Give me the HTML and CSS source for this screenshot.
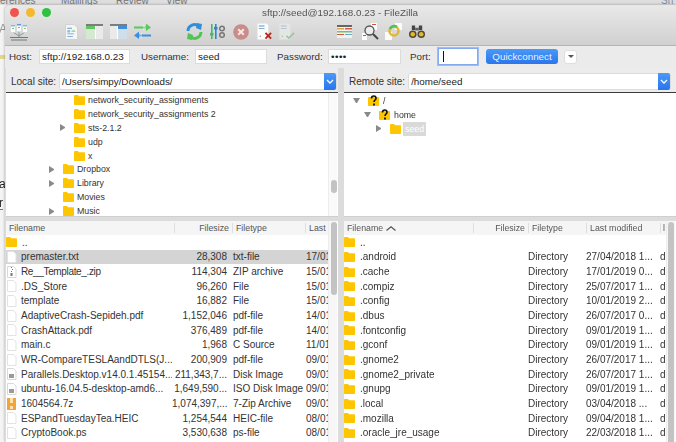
FILE: index.html
```html
<!DOCTYPE html>
<html lang="en">

<head>
  <meta charset="UTF-8" />
  <title>sftp://seed@192.168.0.23 - FileZilla</title>
  <link rel="stylesheet" href="styles.css">
</head>

<body>
  <svg class="defs" width="0" height="0">
    <symbol id="folder" viewBox="0 0 11 10">
      <path d="M0 1.2C0 .5.4 0 1 0h3l1 1.2h5c.6 0 1 .4 1 1V9c0 .6-.4 1-1 1H1c-.6 0-1-.4-1-1z" fill="#fec601" />
    </symbol>
    <symbol id="file" viewBox="0 0 11 12">
      <path d="M1.5.5h6l2.5 2.5v8.500h-8.500z" fill="#fff" stroke="#e2e2e2" />
    </symbol>
    <symbol id="disk" viewBox="0 0 11 12">
      <path d="M1.5.5h6l2.5 2.5v8.500h-8.500z" fill="#fff" stroke="#d8d8d8" />
      <path d="M3 6h5v4H3z" fill="#9a9a9a" />
    </symbol>
    <symbol id="zip" viewBox="0 0 11 12">
      <path d="M1.5.5h6l2.5 2.5v8.500h-8.500z" fill="#fff" stroke="#d8d8d8" />
      <path d="M5 1h1v1H5zM6 3h1v1H6zM5 5h1v1H5zM4.500 7h2v3h-2z" fill="#777" />
    </symbol>
    <symbol id="archive" viewBox="0 0 9 12">
      <path d="M0 0h9v12H0z" fill="#f3a33a" />
      <path d="M3 0h3v5H3zM3 8h3v3H3z" fill="#fbe0b0" />
    </symbol>
    <symbol id="unknown" viewBox="0 0 11 12">
      <path d="M0 3c0-.6.4-1 1-1h9c.6 0 1 .4 1 1v7c0 .6-.4 1-1 1H1c-.6 0-1-.4-1-1z" fill="#fec601" />
      <path d="M3.500 3.500C3.500 1.800 4.500 1 5.700 1S8 1.900 8 3.200C8 5 6 5 6 7" fill="none" stroke="#111" stroke-width="1.600" />
      <path d="M5.100 8.500h1.800v2H5.100z" fill="#111" />
    </symbol>
  </svg>

  <div class="page-top">
    <span class="menu-word menu-prefs">erences</span>
    <span class="menu-word menu-mail">Mailings</span>
    <span class="menu-word menu-review">Review</span>
    <span class="menu-word menu-view">View</span>
    <span class="menu-word menu-share">Sh</span>
  </div>
  <span class="page-scrap scrap-cap">A</span>
  <span class="page-mark"></span>
  <span class="page-scrap scrap-a">a</span>
  <span class="page-scrap scrap-r">r</span>

  <div class="window">
    <div class="titlebar">
      <div class="lights">
        <span class="light red"></span>
        <span class="light yellow"></span>
        <span class="light green"></span>
      </div>
      <div class="title">sftp://seed@192.168.0.23 - FileZilla</div>

      <div class="toolbar">
        <!-- site manager -->
        <svg class="tool tool-site" viewBox="0 0 18 18">
          <path d="M9 9v5M3 9l6 4 6-4" fill="none" stroke="#8c9a8c" />
          <path d="M0 14h18v1H0zM1 16.500h16v1H1z" fill="#6f7a72" />
          <path d="M.5 1.500h5v8h-5zM6.500.5h5v8h-5zM12.500 1.500h5v8h-5z" fill="#f8fafb" stroke="#c4ccd2" stroke-width=".5" />
          <path d="M1 2h4v1.500H1zM13 2h4v1.500h-4z" fill="#8fb7dc" />
          <path d="M7 1h4v1.500H7z" fill="#5c9ad6" />
          <path d="M2 5h2v1H2zM8 4h2v1H8zM14 5h2v1h-2z" fill="#7fc47f" />
        </svg>
        <!-- message log -->
        <svg class="tool tool-log" viewBox="0 0 14 17">
          <path d="M.5.500h9.500l3.500 3.500v12.500H.5z" fill="#f6f6f6" stroke="#cfcfcf" />
          <path d="M2.500 4h5v1h-5zM2.500 10h7v1h-7zM2.500 13h6v1h-6z" fill="#5b9bd5" />
          <path d="M2.500 6.500h3v2.500h-3z" fill="#9ab6cc" />
          <path d="M7 7h4v1H7z" fill="#58c058" />
        </svg>
        <!-- local tree -->
        <svg class="tool tool-pane" viewBox="0 0 17 15">
          <path d="M0 1c0-.6.4-1 1-1h15c.6 0 1 .4 1 1v14H0z" fill="#eaeaea" />
          <path d="M0 0h17v2H0z" fill="#7c7c7c" />
          <path d="M0 2h9v3H0z" fill="#62c462" />
          <path d="M0 5h9v10H0z" fill="#d5e8d2" />
          <path d="M9 2h1v13H9z" fill="#fff" />
        </svg>
        <!-- remote tree -->
        <svg class="tool tool-pane" viewBox="0 0 17 15">
          <path d="M0 1c0-.6.4-1 1-1h15c.6 0 1 .4 1 1v14H0z" fill="#eaeaea" />
          <path d="M0 0h17v2H0z" fill="#7c7c7c" />
          <path d="M8 2h9v3H8z" fill="#3f8fdc" />
          <path d="M8 5h9v10H8z" fill="#d0deea" />
          <path d="M7 2h1v13H7z" fill="#fff" />
        </svg>
        <!-- queue -->
        <svg class="tool tool-queue" viewBox="0 0 17 15">
          <path d="M0 2.500h12v-3l5 4-5 3.500V4.500H0z" fill="#5bc85b" />
          <path d="M17 10.500H5v-3l-5 4 5 3.500v-2.500h12z" fill="#3a8fe0" />
          <path d="M9 0l3 3.500L9 7zM8 8L5 11.500 8 15z" fill="#fff" opacity=".35" />
        </svg>
        <!-- refresh -->
        <svg class="tool tool-refresh" viewBox="0 0 17 17">
          <path d="M2 8a6.500 6.500 0 0 1 11-4.500" fill="none" stroke="#2f8fd8" stroke-width="3" />
          <path d="M11 0l5 1-1 6-5-2z" fill="#2f8fd8" />
          <path d="M15 9a6.500 6.500 0 0 1-11 4.500" fill="none" stroke="#52c452" stroke-width="3" />
          <path d="M6 17l-5-1 1-6 5 2z" fill="#52c452" />
        </svg>
        <!-- filters -->
        <svg class="tool tool-filter" viewBox="0 0 16 17">
          <path d="M1 1h1.600v15H1z" fill="#3ebd6a" />
          <path d="M5 1h1.600v15H5z" fill="#2f84d0" />
          <path d="M0 10h3.500v2.500H0z" fill="#3ebd6a" />
          <path d="M4 4h3.500v2.500H4z" fill="#2f84d0" />
          <circle cx="12" cy="5.500" r="2.300" fill="none" stroke="#777" stroke-width="1.500" />
          <circle cx="12" cy="12" r="2.300" fill="none" stroke="#777" stroke-width="1.500" />
        </svg>
        <!-- cancel -->
        <svg class="tool tool-cancel" viewBox="0 0 17 17">
          <circle cx="8.500" cy="8.500" r="8.300" fill="#c98c88" />
          <path d="M5.500 5.500l6 6M11.500 5.500l-6 6" stroke="#f3e8e6" stroke-width="2.200" />
        </svg>
        <!-- disconnect -->
        <svg class="tool tool-page" viewBox="0 0 17 17">
          <path d="M.5 0h10l1.500 2v15H.5z" fill="#fbfbfb" />
          <path d="M2 2h6v1.200H2zM2 5h6v.8H2z" fill="#5d94c9" />
          <path d="M3 13h1v1H3z" fill="#555" />
          <path d="M9 10l6 6M15 10l-6 6" stroke="#b4281e" stroke-width="2" />
        </svg>
        <!-- reconnect -->
        <svg class="tool tool-page" viewBox="0 0 17 17">
          <path d="M.5 0h10l1.500 2v15H.5z" fill="#e4e6e4" />
          <path d="M2 2h6v1.200H2zM2 5h6v.8H2z" fill="#a9bcc9" />
          <path d="M3 13h1v1H3z" fill="#999" />
          <path d="M8 13l2.500 2.500L16 10" fill="none" stroke="#9cc79c" stroke-width="1.800" />
        </svg>
        <!-- directory listing filters -->
        <svg class="tool tool-list" viewBox="0 0 15 13">
          <path d="M0 0h15v13H0z" fill="#f1f1ee" />
          <path d="M0 0h15v2H0z" fill="#666" />
          <path d="M0 3h7v1.500H0z" fill="#e0a43c" />
          <path d="M8 3h7v1.500H8zM0 9h7v1H0z" fill="#d05a4a" />
          <path d="M0 6h15v1.500H0z" fill="#74c06c" />
          <path d="M8 9h7v1H8z" fill="#6ea5d8" />
        </svg>
        <!-- compare -->
        <svg class="tool tool-search" viewBox="0 0 17 17">
          <path d="M9 0h6v7H9z" fill="#fff" />
          <path d="M10 1h4v1h-4z" fill="#d0503c" />
          <path d="M0 10h5v7H0z" fill="#fff" />
          <path d="M1 12h3v1H1z" fill="#d0503c" />
          <circle cx="7.500" cy="7.500" r="4.500" fill="#f4f4f4" fill-opacity=".7" stroke="#555" stroke-width="1.300" />
          <path d="M11 11l5 5" stroke="#444" stroke-width="2" />
        </svg>
        <!-- sync browse -->
        <svg class="tool tool-sync" viewBox="0 0 17 17">
          <path d="M10 0h7v7h-7zM0 9h7v8H0z" fill="#fbfbfb" />
          <circle cx="9" cy="8" r="4.500" fill="none" stroke="#e2b83a" stroke-width="2.600" />
          <path d="M5 6a4.500 4.500 0 0 1 7-2" fill="none" stroke="#56bf56" stroke-width="2.600" />
        </svg>
        <!-- find -->
        <svg class="tool tool-find" viewBox="0 0 17 15">
          <path d="M3 1h3.500v5H3zM10.500 1H14v5h-3.500z" fill="#444" />
          <path d="M6.500 3.500h4v3h-4z" fill="#666" />
          <circle cx="4" cy="10.500" r="4" fill="#4c4640" />
          <circle cx="13" cy="10.500" r="4" fill="#4c4640" />
          <circle cx="4" cy="10.500" r="2.400" fill="#e8b820" />
          <circle cx="13" cy="10.500" r="2.400" fill="#e8b820" />
        </svg>
      </div>
    </div>

    <div class="quickbar">
      <label class="qc-label qc-host">Host:</label>
      <span class="field field-host">sftp://192.168.0.23</span>
      <label class="qc-label qc-user">Username:</label>
      <span class="field field-user">seed</span>
      <label class="qc-label qc-pass">Password:</label>
      <span class="field field-pass">••••</span>
      <label class="qc-label qc-port">Port:</label>
      <span class="field field-port"><span class="caret"></span></span>
      <span class="qc-button">Quickconnect</span>
      <span class="qc-menu"><span class="qc-arrow"></span></span>
    </div>

    <div class="panes">
      <!-- local side -->
      <section class="side side-local">
        <div class="sitebar">
          <span class="site-label">Local site:</span>
          <span class="combo"><span class="combo-text">/Users/simpy/Downloads/</span><span class="combo-btn"><svg viewBox="0 0 8 5" width="8" height="5"><path d="M1 1l3 3 3-3" fill="none" stroke="#fff" stroke-width="1.300" /></svg></span></span>
        </div>
        <div class="tree">
          <div class="tree-rows">
            <div class="node lvl-2"><i class="tw"></i><svg class="ico"><use href="#folder" /></svg><span>network_security_assignments</span></div>
            <div class="node lvl-2"><i class="tw"></i><svg class="ico"><use href="#folder" /></svg><span>network_security_assignments 2</span></div>
            <div class="node lvl-2"><i class="tw closed"></i><svg class="ico"><use href="#folder" /></svg><span>sts-2.1.2</span></div>
            <div class="node lvl-2"><i class="tw"></i><svg class="ico"><use href="#folder" /></svg><span>udp</span></div>
            <div class="node lvl-2"><i class="tw"></i><svg class="ico"><use href="#folder" /></svg><span>x</span></div>
            <div class="node lvl-1"><i class="tw closed"></i><svg class="ico"><use href="#folder" /></svg><span>Dropbox</span></div>
            <div class="node lvl-1"><i class="tw closed"></i><svg class="ico"><use href="#folder" /></svg><span>Library</span></div>
            <div class="node lvl-1"><i class="tw"></i><svg class="ico"><use href="#folder" /></svg><span>Movies</span></div>
            <div class="node lvl-1"><i class="tw closed"></i><svg class="ico"><use href="#folder" /></svg><span>Music</span></div>
          </div>
          <div class="scroll"><span class="thumb thumb-tree"></span></div>
        </div>
        <div class="listing">
          <div class="list-main">
            <div class="row head">
              <span class="c-name">Filename</span><span class="c-size">Filesize</span><span class="c-type">Filetype</span><span class="c-date">Last</span>
            </div>
            <div class="row"><span class="c-name"><svg class="ico ico-dir"><use href="#folder" /></svg>..</span></div>
            <div class="row sel"><span class="c-name"><svg class="ico ico-file"><use href="#file" /></svg>premaster.txt</span><span class="c-size">28,308</span><span class="c-type">txt-file</span><span class="c-date">17/01</span></div>
            <div class="row"><span class="c-name"><svg class="ico ico-file"><use href="#zip" /></svg><span class="tight">Re__Template_.zip</span></span><span class="c-size">114,304</span><span class="c-type">ZIP archive</span><span class="c-date">15/01</span></div>
            <div class="row"><span class="c-name"><svg class="ico ico-file"><use href="#file" /></svg>.DS_Store</span><span class="c-size">96,260</span><span class="c-type">File</span><span class="c-date">15/01</span></div>
            <div class="row"><span class="c-name"><svg class="ico ico-file"><use href="#file" /></svg>template</span><span class="c-size">16,882</span><span class="c-type">File</span><span class="c-date">15/01</span></div>
            <div class="row"><span class="c-name"><svg class="ico ico-file"><use href="#file" /></svg>AdaptiveCrash-Sepideh.pdf</span><span class="c-size">1,152,046</span><span class="c-type">pdf-file</span><span class="c-date">14/01</span></div>
            <div class="row"><span class="c-name"><svg class="ico ico-file"><use href="#file" /></svg>CrashAttack.pdf</span><span class="c-size">376,489</span><span class="c-type">pdf-file</span><span class="c-date">14/01</span></div>
            <div class="row"><span class="c-name"><svg class="ico ico-file"><use href="#file" /></svg>main.c</span><span class="c-size">1,968</span><span class="c-type">C Source</span><span class="c-date">11/01</span></div>
            <div class="row"><span class="c-name"><svg class="ico ico-file"><use href="#file" /></svg>WR-CompareTESLAandDTLS(J...</span><span class="c-size">200,909</span><span class="c-type">pdf-file</span><span class="c-date">09/01</span></div>
            <div class="row"><span class="c-name"><svg class="ico ico-file"><use href="#disk" /></svg>Parallels.Desktop.v14.0.1.45154...</span><span class="c-size">211,343,7...</span><span class="c-type">Disk Image</span><span class="c-date">09/01</span></div>
            <div class="row"><span class="c-name"><svg class="ico ico-file"><use href="#disk" /></svg>ubuntu-16.04.5-desktop-amd6...</span><span class="c-size">1,649,590...</span><span class="c-type">ISO Disk Image</span><span class="c-date">09/01</span></div>
            <div class="row"><span class="c-name"><svg class="ico ico-file"><use href="#archive" /></svg>1604564.7z</span><span class="c-size">1,074,397,...</span><span class="c-type">7-Zip Archive</span><span class="c-date">09/01</span></div>
            <div class="row"><span class="c-name"><svg class="ico ico-file"><use href="#file" /></svg>ESPandTuesdayTea.HEIC</span><span class="c-size">1,254,544</span><span class="c-type">HEIC-file</span><span class="c-date">08/01</span></div>
            <div class="row"><span class="c-name"><svg class="ico ico-file"><use href="#file" /></svg>CryptoBook.ps</span><span class="c-size">3,530,638</span><span class="c-type">ps-file</span><span class="c-date">08/01</span></div>
            <div class="row"><span class="c-name"><svg class="ico ico-file"><use href="#file" /></svg></span></div>
          </div>
          <div class="scroll scroll-list"><span class="thumb thumb-local"></span></div>
        </div>
      </section>

      <!-- remote side -->
      <section class="side side-remote">
        <div class="sitebar">
          <span class="site-label">Remote site:</span>
          <span class="combo"><span class="combo-text">/home/seed</span><span class="combo-btn"><svg viewBox="0 0 8 5" width="8" height="5"><path d="M1 1l3 3 3-3" fill="none" stroke="#fff" stroke-width="1.300" /></svg></span></span>
        </div>
        <div class="tree">
          <div class="tree-rows remote-rows">
            <div class="node lvl-r0"><i class="tw open"></i><svg class="ico ico-q"><use href="#unknown" /></svg><span>/</span></div>
            <div class="node lvl-r1"><i class="tw open"></i><svg class="ico ico-q"><use href="#unknown" /></svg><span>home</span></div>
            <div class="node lvl-r2"><i class="tw closed"></i><svg class="ico"><use href="#folder" /></svg><span class="node-sel">seed</span></div>
          </div>
        </div>
        <div class="listing">
          <div class="list-main">
            <div class="row head">
              <span class="c-name">Filename <svg class="sort" viewBox="0 0 10 5" width="10" height="5"><path d="M.5 4.500L5 .8l4.500 3.700" fill="none" stroke="#555" stroke-width="1.200" /></svg></span><span class="c-size">Filesize</span><span class="c-type">Filetype</span><span class="c-date">Last modified</span><span class="c-perm">l</span>
            </div>
            <div class="row"><span class="c-name"><svg class="ico ico-dir"><use href="#folder" /></svg>..</span></div>
            <div class="row"><span class="c-name"><svg class="ico ico-dir"><use href="#folder" /></svg>.android</span><span class="c-size"></span><span class="c-type">Directory</span><span class="c-date">27/04/2018 1...</span><span class="c-perm">d</span></div>
            <div class="row"><span class="c-name"><svg class="ico ico-dir"><use href="#folder" /></svg>.cache</span><span class="c-size"></span><span class="c-type">Directory</span><span class="c-date">17/01/2019 0...</span><span class="c-perm">d</span></div>
            <div class="row"><span class="c-name"><svg class="ico ico-dir"><use href="#folder" /></svg>.compiz</span><span class="c-size"></span><span class="c-type">Directory</span><span class="c-date">25/07/2017 1...</span><span class="c-perm">d</span></div>
            <div class="row"><span class="c-name"><svg class="ico ico-dir"><use href="#folder" /></svg>.config</span><span class="c-size"></span><span class="c-type">Directory</span><span class="c-date">10/01/2019 2...</span><span class="c-perm">d</span></div>
            <div class="row"><span class="c-name"><svg class="ico ico-dir"><use href="#folder" /></svg>.dbus</span><span class="c-size"></span><span class="c-type">Directory</span><span class="c-date">26/07/2017 0...</span><span class="c-perm">d</span></div>
            <div class="row"><span class="c-name"><svg class="ico ico-dir"><use href="#folder" /></svg>.fontconfig</span><span class="c-size"></span><span class="c-type">Directory</span><span class="c-date">09/01/2019 1...</span><span class="c-perm">d</span></div>
            <div class="row"><span class="c-name"><svg class="ico ico-dir"><use href="#folder" /></svg>.gconf</span><span class="c-size"></span><span class="c-type">Directory</span><span class="c-date">09/01/2019 1...</span><span class="c-perm">d</span></div>
            <div class="row"><span class="c-name"><svg class="ico ico-dir"><use href="#folder" /></svg>.gnome2</span><span class="c-size"></span><span class="c-type">Directory</span><span class="c-date">26/07/2017 1...</span><span class="c-perm">d</span></div>
            <div class="row"><span class="c-name"><svg class="ico ico-dir"><use href="#folder" /></svg>.gnome2_private</span><span class="c-size"></span><span class="c-type">Directory</span><span class="c-date">26/07/2017 1...</span><span class="c-perm">d</span></div>
            <div class="row"><span class="c-name"><svg class="ico ico-dir"><use href="#folder" /></svg>.gnupg</span><span class="c-size"></span><span class="c-type">Directory</span><span class="c-date">09/01/2019 1...</span><span class="c-perm">d</span></div>
            <div class="row"><span class="c-name"><svg class="ico ico-dir"><use href="#folder" /></svg>.local</span><span class="c-size"></span><span class="c-type">Directory</span><span class="c-date">03/04/2018 ...</span><span class="c-perm">d</span></div>
            <div class="row"><span class="c-name"><svg class="ico ico-dir"><use href="#folder" /></svg>.mozilla</span><span class="c-size"></span><span class="c-type">Directory</span><span class="c-date">09/04/2018 1...</span><span class="c-perm">d</span></div>
            <div class="row"><span class="c-name"><svg class="ico ico-dir"><use href="#folder" /></svg>.oracle_jre_usage</span><span class="c-size"></span><span class="c-type">Directory</span><span class="c-date">22/03/2018 1...</span><span class="c-perm">d</span></div>
            <div class="row"><span class="c-name"><svg class="ico ico-dir"><use href="#folder" /></svg></span></div>
          </div>
          <div class="scroll scroll-list"><span class="thumb thumb-remote"></span></div>
        </div>
      </section>
    </div>
  </div>
</body>

</html>
```
FILE: styles.css
```css
* {
  box-sizing: border-box;
}

html,
body {
  margin: 0;
  height: 100%;
  overflow: hidden;
}

body {
  position: relative;
  background: #f4f4f4;
  font-family: "Liberation Sans", Arial, sans-serif;
  font-size: 10px;
  color: #222;
  filter: blur(.35px);
}

.defs {
  position: absolute;
}

/* the document peeking out behind the window */
.page-top {
  height: 5px;
  background: #dedede;
  position: relative;
  overflow: hidden;
}

.menu-word {
  position: absolute;
  top: -5px;
  font-size: 10px;
  color: #777;
}

.menu-prefs { left: 0; }
.menu-mail { left: 61px; }
.menu-review { left: 116px; }
.menu-view { left: 166px; }
.menu-share { left: 661px; color: #7b8fa8; }

.page-scrap {
  position: absolute;
  left: -1px;
  font-size: 12px;
  color: #222;
  line-height: 12px;
}

.scrap-cap { top: 23px; color: #999; }
.scrap-a { top: 178px; }
.scrap-r { top: 197px; border-bottom: 1px solid #5577cc; }

.page-mark {
  position: absolute;
  top: 55px;
  left: 0;
  width: 5px;
  height: 4px;
  background: #e4d98a;
}

.window {
  position: absolute;
  top: 5px;
  left: 5px;
  width: 671px;
  height: 437px;
  background: #dcdcdc;
  border-radius: 5px 0 0 0;
  box-shadow: 0 0 3px rgba(0, 0, 0, .35);
  overflow: hidden;
  display: flex;
  flex-direction: column;
}

.titlebar {
  height: 41px;
  flex: none;
  background: linear-gradient(#e9e9e9, #d0d0d0);
  border-bottom: 1px solid #b4b4b4;
  position: relative;
}

.lights {
  display: flex;
  gap: 7px;
  padding: 3px 0 0 5px;
}

.light {
  width: 9px;
  height: 9px;
  border-radius: 50%;
}

.red { background: #f0524c; }
.yellow { background: #f5b82e; }
.green { background: #2fc140; }

.title {
  position: absolute;
  top: 1px;
  left: 0;
  width: 670px;
  text-align: center;
  font-size: 9.900px;
  line-height: 14px;
  color: #555;
}

.toolbar {
  display: flex;
  align-items: center;
  height: 21px;
  margin-top: 4px;
  padding-left: 5px;
}

.tool { flex: none; display: block; }

.tool-site { width: 18px; height: 18px; margin-right: 37px; }
.tool-log { width: 13px; height: 16px; margin-right: 8px; }
.tool-pane { width: 17px; height: 15px; margin-right: 7px; }
.tool-queue { width: 17px; height: 15px; margin-right: 35px; }
.tool-refresh { width: 17px; height: 17px; margin-right: 7px; }
.tool-filter { width: 16px; height: 17px; margin-right: 7px; }
.tool-cancel { width: 16px; height: 16px; margin-right: 8px; }
.tool-page { width: 16px; height: 17px; margin-right: 6px; }
.tool-list { width: 15px; height: 13px; margin: 0 10px 0 36px; }
.tool-search { width: 17px; height: 17px; margin-right: 6px; }
.tool-sync { width: 17px; height: 17px; margin-right: 7px; }
.tool-find { width: 16px; height: 15px; }

.quickbar {
  height: 22px;
  flex: none;
  background: #ebebeb;
  display: flex;
  align-items: center;
  padding-bottom: 1px;
}

.qc-label { font-size: 9.800px; color: #333; flex: none; }

.qc-host { margin-left: 4px; width: 30px; }
.qc-user { margin-left: 11px; width: 54px; }
.qc-pass { margin-left: 10px; width: 51px; }
.qc-port { margin-left: 9px; width: 28px; }

.field {
  height: 15px;
  background: #fff;
  border: 1px solid #dcdcdc;
  padding-left: 2px;
  line-height: 13px;
  font-size: 9.900px;
  white-space: nowrap;
  overflow: hidden;
  flex: none;
}

.field-host { width: 91px; }
.field-user { width: 72px; }
.field-pass { width: 73px; letter-spacing: .5px; }

.field-port {
  width: 40px;
  height: 17px;
  border: 1px solid #83aaf0;
  box-shadow: 0 0 0 1px #9dbdf3;
  display: flex;
  align-items: center;
}

.caret {
  display: block;
  width: 1px;
  height: 11px;
  background: #111;
  margin-left: 2px;
}

.qc-button {
  flex: none;
  width: 72px;
  height: 15px;
  margin-left: 8px;
  background: linear-gradient(#4b99f7, #2a75ec);
  border-radius: 3px;
  color: #eaf2ff;
  text-align: center;
  line-height: 15px;
  font-size: 9.800px;
}

.qc-menu {
  flex: none;
  width: 13px;
  height: 14px;
  margin-left: 6px;
  background: #fff;
  border-radius: 3px;
  border: 1px solid #dedede;
  display: flex;
  align-items: center;
  justify-content: center;
}

.qc-arrow {
  width: 0;
  height: 0;
  border-left: 3px solid transparent;
  border-right: 3px solid transparent;
  border-top: 3px solid #555;
}

.panes {
  flex: 1;
  min-height: 0;
  display: flex;
  gap: 6px;
  padding-left: 1px;
}

.side {
  width: 332px;
  display: flex;
  flex-direction: column;
  min-width: 0;
}

.sitebar {
  height: 24px;
  flex: none;
  background: #ececec;
  display: flex;
  align-items: center;
  padding: 2px 1px 0 5px;
  gap: 3px;
}

.side-remote .sitebar { padding-right: 5px; }

.site-label { font-size: 10px; color: #333; flex: none; }

.combo {
  flex: 1;
  height: 17px;
  background: #fff;
  border: 1px solid #dcdcdc;
  display: flex;
  align-items: center;
  border-radius: 2px;
}

.combo-text {
  flex: 1;
  padding-left: 2px;
  font-size: 9.800px;
}

.combo-btn {
  width: 12px;
  height: 17px;
  background: linear-gradient(#4b99f7, #2a75ec);
  border-radius: 0 2px 2px 0;
  display: flex;
  align-items: center;
  justify-content: center;
}

.tree {
  height: 125px;
  flex: none;
  background: #fff;
  border-top: 1px solid #3c3c3c;
  border-bottom: 1px solid #cfcfcf;
  display: flex;
  overflow: hidden;
}

.tree-rows {
  flex: 1;
  min-width: 0;
  color: #333;
}

.node {
  height: 13.900px;
  display: flex;
  align-items: center;
  font-size: 8.800px;
  white-space: nowrap;
}

.tw {
  flex: none;
  width: 5px;
  height: 7px;
  margin-right: 9px;
}

.tw.closed {
  border-left: 5px solid #8a8a8a;
  border-top: 3.500px solid transparent;
  border-bottom: 3.500px solid transparent;
}

.tw.open {
  height: 5px;
  width: 7px;
  margin-right: 8px;
  border-top: 5px solid #8a8a8a;
  border-left: 3.500px solid transparent;
  border-right: 3.500px solid transparent;
}

.ico {
  width: 11px;
  height: 10px;
  flex: none;
  margin-right: 3px;
  display: block;
}

.ico-q { height: 12px; margin-right: 4px; }
.ico-dir { margin-right: 5px; }
.ico-file { height: 12px; margin-right: 4px; }

.lvl-1 { padding-left: 43px; }
.lvl-2 { padding-left: 54px; }

.lvl-1 .tw { margin-right: 9px; }

.remote-rows { padding-top: 1px; }

.lvl-r0 { padding-left: 9px; }
.lvl-r1 { padding-left: 20px; }
.lvl-r2 { padding-left: 32px; }
.lvl-r2 .ico { margin-right: 2px; }

.node-sel {
  background: #d9d9d9;
  color: #fff;
  padding: 0 2px;
  height: 14px;
  line-height: 14px;
}

.scroll {
  width: 9px;
  flex: none;
  background: #fafafa;
  border-left: 1px solid #ededed;
  position: relative;
  margin-right: 1px;
}

.thumb {
  position: absolute;
  left: 1px;
  width: 6px;
  background: #c3c3c3;
  border-radius: 3px;
}

.thumb-tree { left: 2px; top: 87px; height: 13px; }
.thumb-local { left: 2px; top: 1px; height: 73px; }
.thumb-remote { top: 1px; height: 240px; }

.listing {
  flex: 1;
  min-height: 0;
  margin-top: 4px;
  background: #fff;
  display: flex;
  overflow: hidden;
}

.list-main {
  flex: 1;
  min-width: 0;
  overflow: hidden;
}

.row {
  display: grid;
  height: 14.670px;
  align-items: center;
  white-space: nowrap;
  font-size: 10px;
  color: #333;
}

.side-local .row { grid-template-columns: 166px 55px 79px 1fr; }
.side-remote .row { grid-template-columns: 184px 0 58px 74px 1fr; }

.row > span { overflow: hidden; }

.c-name {
  display: flex;
  align-items: center;
}

.tight { letter-spacing: -.35px; }

.c-size { text-align: right; }
.c-type { padding-left: 6px; }

.side-remote .c-type { padding-left: 0; }

.row.sel { background: #d4d4d4; }

.row.head {
  height: 14px;
  background: #f5f5f5;
  font-size: 8.800px;
  color: #555;
}

.side-local .row.head { grid-template-columns: 168px 58px 73px 1fr; }
.side-remote .row.head { grid-template-columns: 129px 55px 58px 74px 1fr; }

.head span + span { border-left: 1px solid #dedede; }
.head .c-name { padding-left: 3px; }
.head .c-size { padding-right: 3px; }
.side-local .head .c-type,
.side-remote .head .c-type,
.head .c-date { padding-left: 3px; }
.head .c-perm { padding-left: 2px; }

.sort { margin-left: 3px; flex: none; }

.scroll-list {
  background: #f7f7f7;
}
```
